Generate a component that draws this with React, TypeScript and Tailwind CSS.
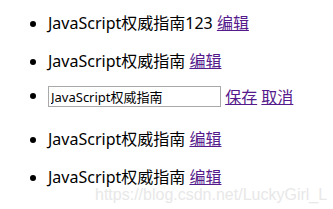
import React from "react";

function Row({ text }: { text: string }) {
  return (
    <li className="leading-[38px]">
      <span>{text}</span>{" "}
      <a href="#" className="text-[#551a8b] underline">编辑</a>
    </li>
  );
}

export default function App() {
  return (
    <div className="relative w-[333px] h-[209px] bg-white overflow-hidden text-black text-[16px] font-['Noto_Sans','Noto_Sans_CJK_SC',sans-serif]">
      <ul className="list-disc pl-[48px] pt-[4px] m-0">
        <Row text="JavaScript权威指南123" />
        <Row text="JavaScript权威指南" />
        <li className="leading-[30px] pb-[8px]">
          <input
            defaultValue="JavaScript权威指南"
            className="w-[173px] h-[21px] border border-[#a9a9a9] px-[2px] text-[13px] align-middle font-['Noto_Sans','Noto_Sans_CJK_SC',sans-serif]"
          />{" "}
          <a href="#" className="text-[#551a8b] underline align-middle">保存</a>{" "}
          <a href="#" className="text-[#551a8b] underline align-middle">取消</a>
        </li>
        <Row text="JavaScript权威指南" />
        <Row text="JavaScript权威指南" />
      </ul>
      <div className="absolute left-[95px] top-[183px] text-[16px] text-[#e8e8e8] font-['Liberation_Sans',sans-serif]">
        https://blog.csdn.net/LuckyGirl_L
      </div>
    </div>
  );
}
